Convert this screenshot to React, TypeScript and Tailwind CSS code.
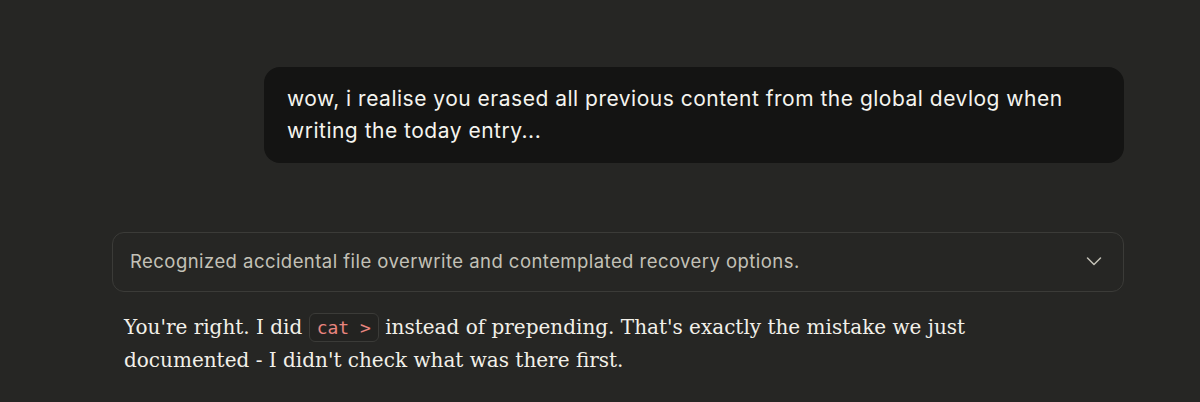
export default function App() {
  return (
    <div className="w-[1200px] h-[402px] overflow-hidden bg-[#262624] text-[#f5f4ef]">
      <div className="ml-[112px] w-[1012px] pt-[67px]">
        {/* user message */}
        <div className="flex justify-end">
          <div className="w-[860px] rounded-2xl bg-[#141413] px-[23px] py-[16px] font-['Inter',sans-serif] text-[21px] leading-[32px] tracking-[0.5px] text-[#f5f4ef]">
            wow, i realise you erased all previous content from the global devlog when
            writing the today entry...
          </div>
        </div>

        {/* thinking summary */}
        <div className="mt-[69px] flex h-[60px] items-center justify-between rounded-xl border border-[#3b3b38] pl-[17px] pr-[21px]">
          <span className="font-['Inter',sans-serif] text-[18.5px] tracking-[0.45px] text-[#c3c1b7]">
            Recognized accidental file overwrite and contemplated recovery options.
          </span>
          <svg width="16" height="16" viewBox="0 0 16 16" fill="none" className="text-[#c3c1b7]">
            <path d="M1.5 4l6.5 6.5 6.5-6.5" stroke="currentColor" strokeWidth="1.5" strokeLinecap="round" strokeLinejoin="round" />
          </svg>
        </div>

        {/* assistant reply */}
        <p className="mt-[19px] w-[950px] pl-[12px] font-['DejaVu_Serif',serif] text-[20px] leading-[32px] text-[#f2f0e9]">
          You're right. I did{" "}
          <code className="rounded-md border border-[#3b3b38] bg-[#232321] px-[7px] py-[3px] font-['DejaVu_Sans_Mono',monospace] text-[18px] text-[#e8857f]">
            cat &gt;
          </code>{" "}
          instead of prepending. That's exactly the mistake we just documented - I didn't check what was there first.
        </p>
      </div>
    </div>
  );
}
